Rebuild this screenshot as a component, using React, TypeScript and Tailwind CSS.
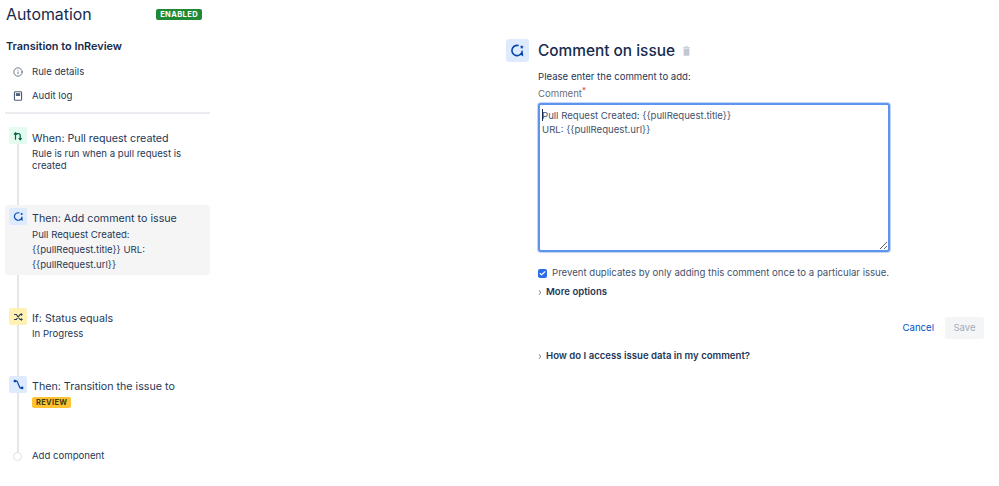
import React from 'react';
import { Info, ChevronRight, Check } from 'lucide-react';

function CommentIcon({ className }: { className?: string }) {
  return (
    <svg viewBox="0 0 16 16" fill="none" className={className}>
      <path d="M13 8.8A5.5 5.5 0 1 1 8.6 2.6" stroke="currentColor" strokeWidth="1.7" strokeLinecap="round" />
      <path d="M10.6 12 14.2 14.4l-.5-4.6z" fill="currentColor" />
      <path d="M12.6 2.2l.6 1.3 1.4.2-1 1 .3 1.4-1.3-.7-1.3.7.3-1.4-1-1 1.4-.2z" fill="currentColor" />
    </svg>
  );
}

function PullRequestIcon({ className }: { className?: string }) {
  return (
    <svg viewBox="0 0 16 16" fill="none" className={className} stroke="currentColor" strokeWidth="2">
      <path d="M4 14V3M1.5 5.5 4 3l2.5 2.5" />
      <path d="M4 4h4.5a3 3 0 0 1 3 3v7M9.2 11.5l2.3 2.5 2.3-2.5" />
    </svg>
  );
}

function ShuffleIcon({ className }: { className?: string }) {
  return (
    <svg viewBox="0 0 16 16" fill="none" className={className} stroke="currentColor" strokeWidth="1.8">
      <path d="M1 4h3.5l6 8H14M1 12h3.5l6-8H14" />
      <path d="M12 2l2.5 2L12 6zM12 10l2.5 2-2.5 2z" fill="currentColor" strokeWidth="0.6" />
    </svg>
  );
}

function TransitionIcon({ className }: { className?: string }) {
  return (
    <svg viewBox="0 0 16 16" fill="none" className={className}>
      <circle cx="2.8" cy="3" r="2" fill="currentColor" />
      <circle cx="13.2" cy="13" r="2" fill="currentColor" />
      <path d="M3 3h2.8l4.4 10H13" stroke="currentColor" strokeWidth="1.8" />
    </svg>
  );
}

function AuditIcon({ className }: { className?: string }) {
  return (
    <svg viewBox="0 0 12 14" fill="none" className={className}>
      <rect x="1" y="1" width="10" height="12" rx="1.2" stroke="currentColor" strokeWidth="1.6" />
      <rect x="3" y="3" width="6" height="4" fill="currentColor" />
    </svg>
  );
}

function TrashIcon({ className }: { className?: string }) {
  return (
    <svg viewBox="0 0 12 14" className={className} fill="currentColor">
      <rect x="1" y="1.8" width="10" height="1.5" />
      <rect x="4.2" y="0.4" width="3.6" height="1.5" />
      <path d="M2 4h8v9a.8.8 0 0 1-.8.8H2.8A.8.8 0 0 1 2 13z" />
    </svg>
  );
}

function Step({ icon, iconBg, title, active, children, className, bodyClassName = 'pt-[2px]' }: {
  icon: React.ReactNode;
  iconBg: string;
  title: string;
  active?: boolean;
  children: React.ReactNode;
  className?: string;
  bodyClassName?: string;
}) {
  return (
    <div className={`flex gap-[5px] rounded-[3px] pl-[4px] pr-2 ${active ? 'bg-[#f5f5f5]' : ''} ${className ?? ''}`}>
      <div className={`relative z-10 flex h-[17px] w-[18px] shrink-0 items-center justify-center rounded-[2px] ${iconBg}`}>
        {icon}
      </div>
      <div className={bodyClassName}>
        <div className="text-[10.7px] leading-[17px] text-[#253858]">{title}</div>
        {children}
      </div>
    </div>
  );
}

export default function App() {
  return (
    <div className="flex h-[486px] w-[999px] overflow-hidden bg-white font-['Inter',sans-serif] text-[#253858]">
      <aside className="ml-[5px] w-[205px] shrink-0">
        <div className="flex items-center justify-between pr-[8px] pt-[3px]">
          <h1 className="pl-[1px] text-[15.9px] leading-[24px] text-[#172b4d]">Automation</h1>
          <span className="mb-[2px] rounded-[2px] bg-[#1f8a35] px-[4px] text-[7.5px] font-bold leading-[11px] tracking-[0.4px] text-white">ENABLED</span>
        </div>
        <h2 className="mt-[11px] pl-[1px] text-[10.9px] font-semibold leading-[16px] text-[#172b4d]">Transition to InReview</h2>
        <div className="mt-[11px] flex items-center gap-[9px] pl-[8px] text-[9.6px] leading-[14px]">
          <Info className="h-[10px] w-[10px] text-[#505f79]" strokeWidth={2} />
          <span>Rule details</span>
        </div>
        <div className="mt-[10px] flex items-center gap-[9px] pl-[8px] text-[9.6px] leading-[14px]">
          <AuditIcon className="h-[10px] w-[10px] text-[#505f79]" />
          <span>Audit log</span>
        </div>
        <div className="mt-[9px] h-[2px] bg-[#ebecf0]" />

        <div className="relative mt-[13px]">
          <div className="absolute bottom-[7px] left-[12px] top-[8px] w-[2px] bg-[#e4e6ea]" />
          <Step
            bodyClassName="pt-[3px]"
            icon={<PullRequestIcon className="h-[10px] w-[10px] text-[#006644]" />}
            iconBg="bg-[#e3fcef]"
            title="When: Pull request created"
          >
            <p className="mt-[1px] text-[9.6px] leading-[12px]">Rule is run when a pull request is created</p>
          </Step>
          <Step
            active
            className="relative mt-[33px] h-[70px] pt-[3px]"
            icon={<CommentIcon className="h-[11px] w-[11px] text-[#0747a6]" />}
            iconBg="bg-[#deebff]"
            title="Then: Add comment to issue"
          >
            <p className="text-[9.6px] leading-[15px]">
              Pull Request Created:<br />{'{{pullRequest.title}}'} URL:<br />{'{{pullRequest.url}}'}
            </p>
          </Step>
          <Step
            className="mt-[33px]"
            icon={<ShuffleIcon className="h-[10px] w-[11px] text-[#253858]" />}
            iconBg="bg-[#fff0b3]"
            title="If: Status equals"
          >
            <p className="text-[9.6px] leading-[14px]">In Progress</p>
          </Step>
          <Step
            className="mt-[35px]"
            icon={<TransitionIcon className="h-[11px] w-[11px] text-[#0747a6]" />}
            iconBg="bg-[#deebff]"
            title="Then: Transition the issue to"
          >
            <span className="mt-[2px] block w-fit rounded-[2px] bg-[#ffc233] px-[4px] text-[7.5px] font-bold leading-[11px] tracking-[0.3px] text-[#403a10]">REVIEW</span>
          </Step>
          <div className="mt-[41px] flex items-center gap-[10px] pl-[8px]">
            <span className="relative z-10 h-[9px] w-[9px] rounded-full border border-[#dfe1e6] bg-white" />
            <span className="text-[9.6px] leading-[14px]">Add component</span>
          </div>
        </div>
      </aside>

      <main className="ml-[296px] flex w-[478px] flex-col pt-[39px]">
        <div className="flex gap-[9px]">
          <div className="flex h-[23px] w-[23px] shrink-0 items-center justify-center rounded-[3px] bg-[#deebff]">
            <CommentIcon className="h-[15px] w-[15px] text-[#0747a6]" />
          </div>
          <div className="flex-1">
            <div className="flex items-center gap-[7px]">
              <h2 className="text-[15.4px] font-medium leading-[23px] text-[#172b4d]">Comment on issue</h2>
              <TrashIcon className="mt-[1px] h-[10px] w-[9px] text-[#c1c7d0]" />
            </div>
            <p className="mt-[8px] text-[9.6px] leading-[14px]">Please enter the comment to add:</p>
          </div>
        </div>
        <div className="ml-[32px]">
          <label className="mt-[3px] block text-[9.6px] leading-[14px] text-[#6b6e76]">
            Comment<sup className="text-[8px] leading-none text-[#de350b]">*</sup>
          </label>
          <div className="relative mt-[2px] w-[352px]">
            <textarea
              readOnly
              className="block h-[149px] w-full rounded-[3px] border-2 border-[#5f94ee] bg-white px-[2px] py-[4px] text-[9.6px] leading-[14px] text-[#42526e] shadow-[0_0_0_1px_#c3d6f8] outline-none"
              value={'Pull Request Created: {{pullRequest.title}}\nURL: {{pullRequest.url}}'}
            />
            <span className="absolute left-[4px] top-[6px] h-[12px] w-px bg-[#172b4d]" />
          </div>
          <div className="mt-[14px] flex items-center gap-[5px] text-[9.6px] leading-[14px] text-[#42526e]">
            <span className="flex h-[9px] w-[9px] items-center justify-center rounded-[2px] bg-[#2b6de8]">
              <Check className="h-[7px] w-[7px] text-white" strokeWidth={4} />
            </span>
            <span>Prevent duplicates by only adding this comment once to a particular issue.</span>
          </div>
          <div className="mt-[5px] flex items-center gap-[4px] text-[9.6px] font-semibold leading-[14px]">
            <ChevronRight className="h-[7px] w-[4px] text-[#253858]" strokeWidth={3} preserveAspectRatio="none" />
            <span>More options</span>
          </div>
          <div className="mt-[18px] flex items-center justify-end gap-[11px]">
            <span className="pt-[1px] text-[9.6px] text-[#0052cc]">Cancel</span>
            <span className="flex h-[22px] w-[39px] items-center justify-center rounded-[3px] bg-[#f4f5f7] text-[9.6px] text-[#a5adba]">Save</span>
          </div>
          <div className="mt-[10px] flex items-center gap-[4px] text-[9.6px] font-semibold leading-[14px]">
            <ChevronRight className="h-[7px] w-[4px] text-[#253858]" strokeWidth={3} preserveAspectRatio="none" />
            <span>How do I access issue data in my comment?</span>
          </div>
        </div>
      </main>
    </div>
  );
}
